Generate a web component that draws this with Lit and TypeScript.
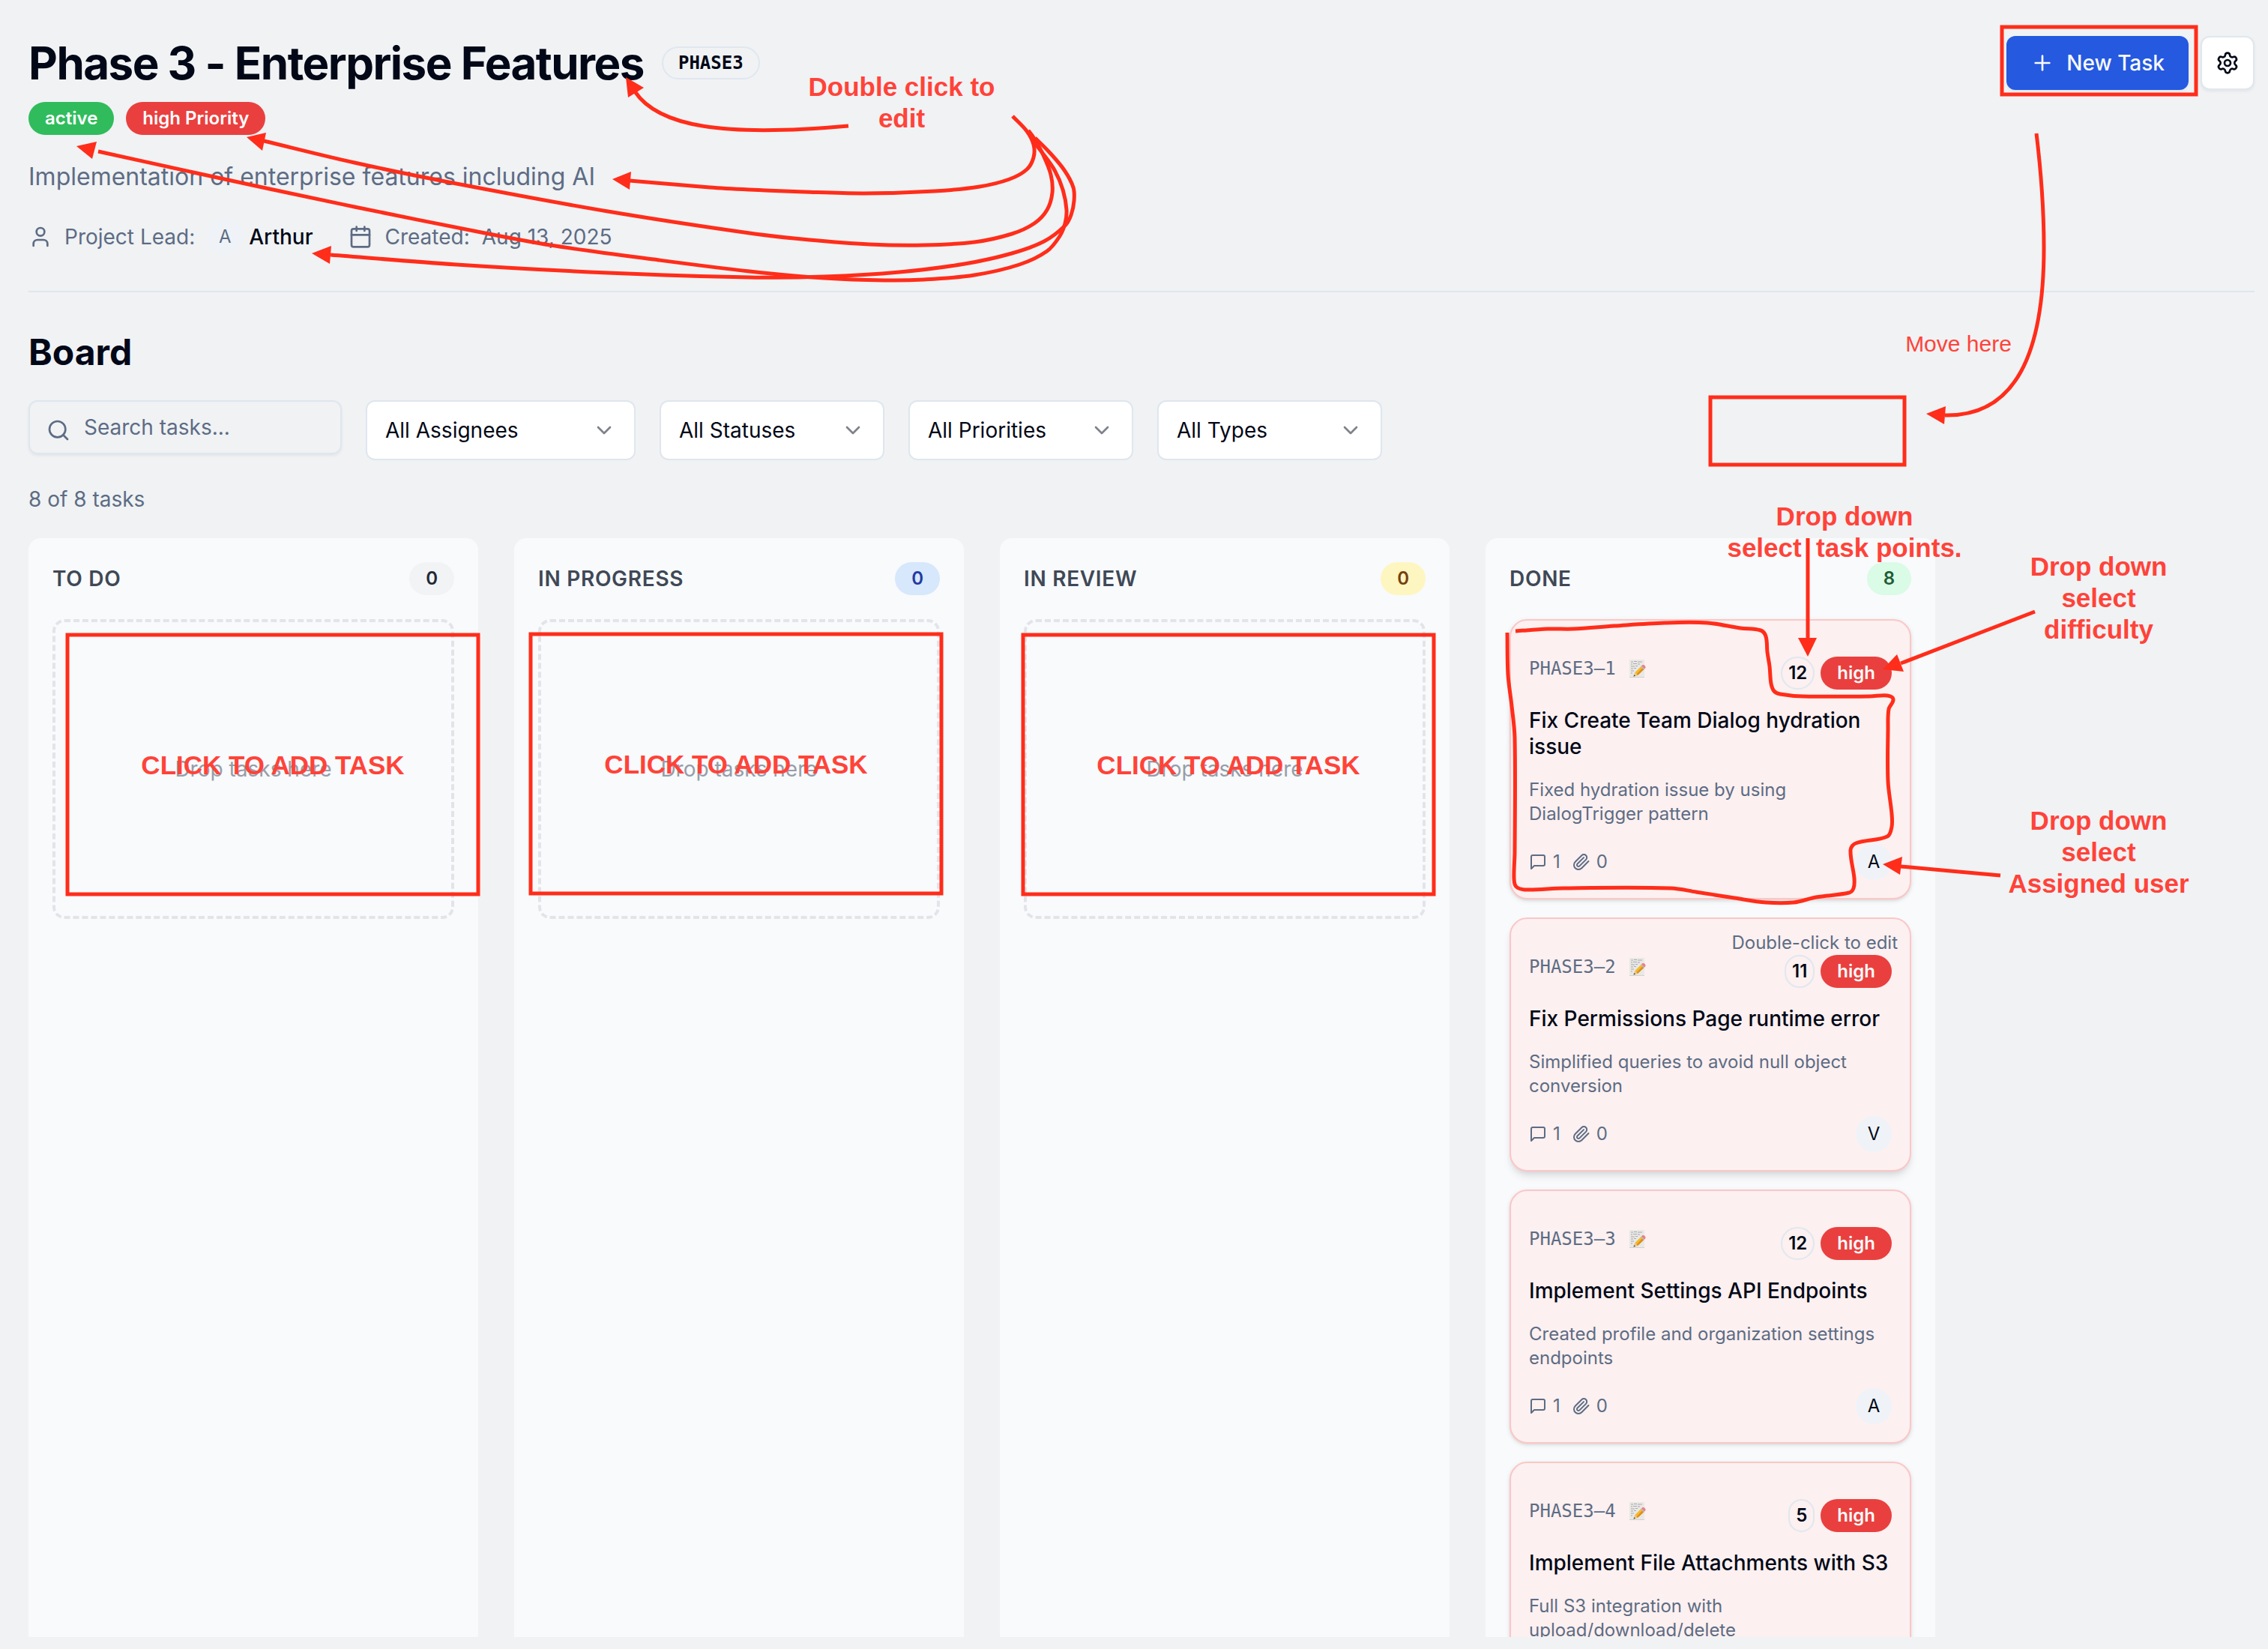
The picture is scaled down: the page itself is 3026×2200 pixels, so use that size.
import { LitElement, html, css, svg, nothing } from "lit";
import { customElement, property } from "lit/decorators.js";

type Point = [number, number];

interface Task {
  key: string;
  points: number;
  priority: string;
  title: string;
  text: string;
  comments: number;
  files: number;
  assignee: string;
  hovered?: boolean;
}

interface Column {
  name: string;
  tone: string;
  count: number;
  tasks: Task[];
}

interface Arrow {
  line: Point[] | string;
  head: Point[];
}

interface Note {
  x: number;
  y: number;
  lines: string[];
  light?: boolean;
}

const icon = (body: unknown) => html`<svg
  class="icon"
  viewBox="0 0 24 24"
  fill="none"
  stroke="currentColor"
  stroke-width="2"
  stroke-linecap="round"
  stroke-linejoin="round"
  aria-hidden="true"
>${body}</svg>`;

const glyph = {
  user: svg`<path d="M19 21v-2a4 4 0 0 0-4-4H9a4 4 0 0 0-4 4v2"/><circle cx="12" cy="7" r="4"/>`,
  calendar: svg`<path d="M8 2v4"/><path d="M16 2v4"/><rect width="18" height="18" x="3" y="4" rx="2"/><path d="M3 10h18"/>`,
  plus: svg`<path d="M5 12h14"/><path d="M12 5v14"/>`,
  settings: svg`<path d="M9.671 4.136a2.34 2.34 0 0 1 4.659 0 2.34 2.34 0 0 0 3.319 1.915 2.34 2.34 0 0 1 2.33 4.033 2.34 2.34 0 0 0 0 3.831 2.34 2.34 0 0 1-2.33 4.033 2.34 2.34 0 0 0-3.319 1.915 2.34 2.34 0 0 1-4.659 0 2.34 2.34 0 0 0-3.32-1.915 2.34 2.34 0 0 1-2.33-4.033 2.34 2.34 0 0 0 0-3.831A2.34 2.34 0 0 1 6.35 6.051a2.34 2.34 0 0 0 3.319-1.915"/><circle cx="12" cy="12" r="3"/>`,
  search: svg`<circle cx="11" cy="11" r="8"/><path d="m21 21-4.3-4.3"/>`,
  chevron: svg`<path d="m6 9 6 6 6-6"/>`,
  message: svg`<path d="M21 15a2 2 0 0 1-2 2H7l-4 4V5a2 2 0 0 1 2-2h14a2 2 0 0 1 2 2z"/>`,
  clip: svg`<path d="m21.44 11.05-9.19 9.19a6 6 0 0 1-8.49-8.49l8.57-8.57A4 4 0 1 1 18 8.84l-8.59 8.57a2 2 0 0 1-2.83-2.83l8.49-8.48"/>`,
};

const memo = html`<svg class="memo" viewBox="0 0 24 24" aria-hidden="true">
  <rect x="2" y="0" width="20" height="24" fill="#e9e8e7"/>
  <path d="M2 23.500H22" stroke="#d2d1d0" stroke-width="1"/>
  <path d="M4 3h3M8 2.500h4M13 3h6M4 6h2M7 5.500h5M13 6h3M4 9h5M10 8.500h3M4 12h3M8 11.500h3M4 15h4M4 18h2" stroke="#a9a9a9" stroke-width="1"/>
  <path d="M7.500 22.500 9.500 17 18 8.500 22 12.500 13 21Z" fill="#f5b92f"/>
  <path d="M11.500 19.500 20 10.500 22 12.500 13 21Z" fill="#da8f1f"/>
  <path d="M18 8.500 19.500 7Q21.500 6.500 22.700 8.200T23.500 11L22 12.500Z" fill="#ea7f86"/>
  <path d="M17 9.500 18 8.500 22 12.500 21 13.500Z" fill="#b9bcc2"/>
  <path d="M7.500 22.500 9.500 17 13 21Z" fill="#e9c692"/>
  <path d="M7.500 22.500 8.300 20.200 10 21.800Z" fill="#3c3c3c"/>
</svg>`;

const columns: Column[] = [
  { name: "TO DO", tone: "gray", count: 0, tasks: [] },
  { name: "IN PROGRESS", tone: "blue", count: 0, tasks: [] },
  { name: "IN REVIEW", tone: "yellow", count: 0, tasks: [] },
  {
    name: "DONE",
    tone: "green",
    count: 8,
    tasks: [
      { key: "PHASE3–1", points: 12, priority: "high", title: "Fix Create Team Dialog hydration issue", text: "Fixed hydration issue by using DialogTrigger pattern", comments: 1, files: 0, assignee: "A" },
      { key: "PHASE3–2", points: 11, priority: "high", title: "Fix Permissions Page runtime error", text: "Simplified queries to avoid null object conversion", comments: 1, files: 0, assignee: "V", hovered: true },
      { key: "PHASE3–3", points: 12, priority: "high", title: "Implement Settings API Endpoints", text: "Created profile and organization settings endpoints", comments: 1, files: 0, assignee: "A" },
      { key: "PHASE3–4", points: 5, priority: "high", title: "Implement File Attachments with S3", text: "Full S3 integration with upload/download/delete", comments: 1, files: 0, assignee: "A" },
    ],
  },
];

const filters = [
  { label: "Assignee", value: "All Assignees", wide: true },
  { label: "Status", value: "All Statuses" },
  { label: "Priority", value: "All Priorities" },
  { label: "Type", value: "All Types" },
];

/* Review markup drawn over the page */
const frames = [
  { x: 2671, y: 36, w: 259, h: 90 },
  { x: 2282, y: 530, w: 259, h: 90 },
  { x: 90, y: 847, w: 548, h: 346 },
  { x: 708, y: 846, w: 548, h: 346 },
  { x: 1365, y: 847, w: 548, h: 346 },
];

const arrows: Arrow[] = [
  {
    line: "M1132 168C965 183 878 169 847 122",
    head: [[835, 103], [859, 117], [838, 130]],
  },
  {
    line: [[1351, 155], [1370, 175], [1379, 193], [1379, 210], [1370, 226], [1347, 239], [1307, 249], [1247, 255], [1153, 258], [1073, 256], [1000, 253], [947, 250], [840, 241]],
    head: [[817, 239], [842, 229], [840, 253]],
  },
  {
    line: [[1372, 174], [1380, 185], [1392, 207], [1402, 233], [1404, 257], [1397, 280], [1380, 298], [1350, 312], [1300, 323], [1233, 327], [1160, 326], [1080, 320], [1000, 311], [811, 282], [609, 245], [473, 217], [352, 188]],
    head: [[329, 183], [355, 177], [350, 201]],
  },
  {
    line: [[1378, 188], [1390, 203], [1407, 227], [1418, 253], [1423, 280], [1421, 298], [1414, 315], [1397, 335], [1360, 353], [1300, 367], [1233, 373], [1180, 374], [1100, 371], [1000, 362], [879, 347], [734, 327], [642, 310], [473, 276], [304, 240], [131, 202]],
    head: [[102, 195], [129, 189], [123, 212]],
  },
  {
    line: [[1381, 184], [1400, 203], [1420, 227], [1432, 250], [1433, 268], [1429, 287], [1421, 301], [1393, 322], [1350, 338], [1287, 352], [1200, 363], [1100, 369], [1000, 370], [811, 364], [609, 353], [441, 340]],
    head: [[416, 338], [442, 328], [440, 352]],
  },
  {
    line: "M2717 178C2724 236 2727 280 2727 330C2727 470 2690 556 2595 554",
    head: [[2570, 552], [2596, 542], [2594, 566]],
  },
  { line: [[2412, 718], [2412, 852]], head: [[2399, 851], [2424, 851], [2412, 876]] },
  { line: [[2715, 816], [2536, 885]], head: [[2512, 893], [2531, 873], [2540, 896]] },
  { line: [[2669, 1168], [2536, 1156]], head: [[2512, 1153], [2538, 1143], [2535, 1167]] },
];

const outline: Point[] = [
  [2022, 842], [2065, 839], [2099, 839], [2154, 835], [2221, 831], [2278, 831], [2322, 838], [2349, 841],
  [2356, 849], [2358, 870], [2361, 889], [2363, 912], [2367, 922], [2375, 926], [2406, 929], [2495, 929],
  [2518, 928], [2526, 933], [2520, 946], [2519, 973], [2519, 1042], [2524, 1086], [2524, 1103], [2518, 1116],
  [2476, 1125], [2469, 1134], [2474, 1172], [2473, 1185], [2467, 1191], [2423, 1197], [2393, 1204], [2356, 1204],
  [2314, 1198], [2263, 1190], [2229, 1185], [2086, 1185], [2036, 1187], [2023, 1183], [2020, 1172], [2021, 1137],
  [2021, 984], [2017, 942], [2012, 900], [2011, 844],
];

const notes: Note[] = [
  { x: 1203, y: 95, lines: ["Double click to", "edit"] },
  { x: 2613, y: 438, lines: ["Move here"], light: true },
  { x: 2461, y: 668, lines: ["Drop down", "select  task points."] },
  { x: 2800, y: 735, lines: ["Drop down", "select", "difficulty"] },
  { x: 2800, y: 1074, lines: ["Drop down", "select", "Assigned user"] },
  { x: 364, y: 1000, lines: ["CLICK TO ADD TASK"] },
  { x: 982, y: 999, lines: ["CLICK TO ADD TASK"] },
  { x: 1639, y: 1000, lines: ["CLICK TO ADD TASK"] },
];

/* Catmull-Rom spline through the points, written as cubic segments */
function smooth(pts: Point[] | string): string {
  if (typeof pts === "string") return pts;
  let d = `M${pts[0][0]} ${pts[0][1]}`;
  for (let i = 0; i < pts.length - 1; i++) {
    const a = pts[Math.max(i - 1, 0)];
    const b = pts[i];
    const c = pts[i + 1];
    const e = pts[Math.min(i + 2, pts.length - 1)];
    const len = Math.hypot(c[0] - b[0], c[1] - b[1]);
    const k1 = len / (Math.hypot(c[0] - a[0], c[1] - a[1]) || 1) / 3;
    const k2 = len / (Math.hypot(e[0] - b[0], e[1] - b[1]) || 1) / 3;
    d += `C${b[0] + (c[0] - a[0]) * k1} ${b[1] + (c[1] - a[1]) * k1} ${c[0] - (e[0] - b[0]) * k2} ${c[1] - (e[1] - b[1]) * k2} ${c[0]} ${c[1]}`;
  }
  return d;
}

@customElement("review-markup")
export class ReviewMarkup extends LitElement {
  static styles = css`
    :host {
      position: absolute;
      inset: 0;
      overflow: hidden;
      pointer-events: none;
    }
    .lines {
      position: absolute;
      top: 0;
      left: 0;
      overflow: visible;
    }
    .stroke {
      fill: none;
      stroke: #ff2d1a;
      stroke-width: 5;
    }
    .head {
      fill: #ff2d1a;
    }
    .note {
      position: absolute;
      margin: 0;
      transform: translateX(-50%);
      font: 700 35px/42px "Liberation Sans", Arial, sans-serif;
      color: #ff4339;
      text-align: center;
      white-space: pre;
    }
    .note.light {
      font-weight: 400;
      font-size: 30px;
    }
  `;

  render() {
    return html`
      <svg class="lines" width="1" height="1" aria-hidden="true">
        ${frames.map((f) => svg`<rect class="stroke" x=${f.x} y=${f.y} width=${f.w} height=${f.h}/>`)}
        ${arrows.map(
          (a) => svg`<path class="stroke" d=${smooth(a.line)}/><polygon class="head" points=${a.head.join(" ")}/>`,
        )}
        <path class="stroke" d=${smooth(outline)} />
      </svg>
      ${notes.map(
        (n) =>
          html`<p class="note ${n.light ? "light" : ""}" style="left:${n.x}px;top:${n.y}px">${n.lines.join("\n")}</p>`,
      )}
    `;
  }
}

@customElement("task-card")
export class TaskCard extends LitElement {
  @property({ attribute: false }) task!: Task;

  static styles = css`
    :host {
      display: block;
    }
    .card {
      position: relative;
      display: flex;
      flex-direction: column;
      gap: 24px;
      padding: 48px 24px 24px;
      border: 2px solid #fcc6c6;
      border-radius: 24px;
      background: #fcf0f0;
      box-shadow: 0 2px 6px rgb(0 0 0 / 0.1), 0 2px 4px -2px rgb(0 0 0 / 0.1);
      font-size: 24px;
      line-height: 32px;
      color: #5d6c84;
    }
    .card.hovered {
      box-shadow: 0 8px 12px -2px rgb(0 0 0 / 0.1), 0 4px 8px -4px rgb(0 0 0 / 0.1);
    }
    .hint {
      position: absolute;
      top: 16px;
      right: 16px;
    }
    .top,
    .bottom {
      display: flex;
      justify-content: space-between;
      align-items: flex-start;
    }
    .bottom {
      align-items: center;
    }
    .id {
      display: flex;
      align-items: center;
      gap: 16px;
      font-family: "DejaVu Sans Mono", monospace;
    }
    .memo {
      width: 24px;
      height: 24px;
    }
    .badges {
      display: flex;
      gap: 8px;
    }
    .badge {
      box-sizing: border-box;
      height: 44px;
      border: 2px solid transparent;
      border-radius: 22px;
      font: 600 24px/40px Inter, sans-serif;
    }
    .points {
      padding: 0 8px;
      border-color: #e0e7ef;
      background: none;
      color: #020817;
    }
    .priority {
      padding: 0 20px;
      background: #e9403f;
      color: #fafafa;
    }
    .title {
      margin: 0;
      font-size: 28px;
      font-weight: 500;
      line-height: 35px;
      color: #020817;
    }
    .text {
      margin: 0;
    }
    .stats,
    .stat {
      display: flex;
      align-items: center;
      gap: 16px;
    }
    .stat {
      gap: 8px;
    }
    .icon {
      width: 24px;
      height: 24px;
    }
    .avatar {
      width: 48px;
      height: 48px;
      padding: 0;
      border: 0;
      border-radius: 50%;
      background: #eff3f8;
      font: 400 24px/48px Inter, sans-serif;
      color: #020817;
    }
  `;

  render() {
    const t = this.task;
    return html`<article class="card ${t.hovered ? "hovered" : ""}">
      ${t.hovered ? html`<span class="hint">Double-click to edit</span>` : nothing}
      <div class="top">
        <span class="id">${t.key}${memo}</span>
        <div class="badges">
          <button class="badge points">${t.points}</button>
          <button class="badge priority">${t.priority}</button>
        </div>
      </div>
      <h4 class="title">${t.title}</h4>
      <p class="text">${t.text}</p>
      <div class="bottom">
        <div class="stats">
          <span class="stat">${icon(glyph.message)}${t.comments}</span>
          <span class="stat">${icon(glyph.clip)}${t.files}</span>
        </div>
        <button class="avatar">${t.assignee}</button>
      </div>
    </article>`;
  }
}

@customElement("app-root")
export class AppRoot extends LitElement {
  static styles = css`
    :host {
      position: relative;
      display: flex;
      flex-direction: column;
      gap: 48px;
      box-sizing: border-box;
      height: 100vh;
      padding: 48px 18px 16px 38px;
      overflow: hidden;
      background: #f0f2f4;
      font: 400 28px/40px Inter, sans-serif;
      color: #020817;
    }
    h1,
    h2,
    h3,
    p {
      margin: 0;
    }
    .icon {
      flex: none;
      width: 32px;
      height: 32px;
    }
    .header {
      display: flex;
      justify-content: space-between;
      align-items: flex-start;
      padding-bottom: 48px;
      border-bottom: 2px solid #dfe6ee;
    }
    .project {
      display: flex;
      flex-direction: column;
      gap: 32px;
    }
    .heading {
      display: flex;
      flex-direction: column;
      gap: 16px;
    }
    .name,
    .tags,
    .meta,
    .fact,
    .actions,
    .person {
      display: flex;
      align-items: center;
    }
    .name {
      gap: 24px;
    }
    .tags,
    .fact,
    .actions {
      gap: 16px;
    }
    .person {
      gap: 8px;
      color: #020817;
      font-weight: 500;
    }
    .title {
      font-size: 60px;
      font-weight: 700;
      line-height: 72px;
      letter-spacing: -0.025em;
    }
    .pill {
      padding: 0 20px;
      border: 2px solid transparent;
      border-radius: 22px;
      font-size: 24px;
      font-weight: 600;
      line-height: 40px;
    }
    .pill.code {
      border-color: #e0e7ef;
      font-family: "DejaVu Sans Mono", monospace;
    }
    .pill.active {
      background: #30bc5c;
      color: #fff;
    }
    .pill.high {
      background: #e9403f;
      color: #fff;
    }
    .summary {
      font-size: 32px;
      line-height: 48px;
      color: #5d6c84;
    }
    .meta {
      gap: 48px;
      height: 48px;
      color: #5d6c84;
    }
    .face {
      width: 48px;
      border-radius: 50%;
      background: #eff3f8;
      font-size: 24px;
      font-weight: 400;
      line-height: 48px;
      text-align: center;
      color: #5d6c84;
    }
    .new,
    .gear {
      display: flex;
      align-items: center;
      justify-content: center;
      gap: 16px;
      box-sizing: border-box;
      height: 72px;
      padding: 0 32px;
      border: 0;
      border-radius: 12px;
      background: #2459e0;
      font: 500 28px/40px Inter, sans-serif;
      color: #f8fafc;
      box-shadow: 0 2px 4px rgb(0 0 0 / 0.06);
    }
    .gear {
      width: 72px;
      padding: 0;
      border: 2px solid #e0e7ef;
      background: #fff;
      color: #020817;
    }
    .board {
      display: flex;
      flex: 1;
      flex-direction: column;
      gap: 32px;
      min-height: 0;
    }
    .board-title {
      font-size: 48px;
      font-weight: 700;
      line-height: 64px;
    }
    .filters {
      display: flex;
      gap: 32px;
      height: 80px;
    }
    .search {
      position: relative;
      flex: 0 1 418px;
    }
    .search .icon {
      position: absolute;
      top: 24px;
      left: 24px;
      color: #5d6c84;
    }
    .search-box {
      box-sizing: border-box;
      width: 100%;
      height: 72px;
      padding: 0 24px 0 72px;
      border: 2px solid #dfe6ee;
      border-radius: 12px;
      background: transparent;
      box-shadow: 0 2px 4px rgb(0 0 0 / 0.06);
      font: inherit;
    }
    .search-box::placeholder {
      color: #5d6c84;
      opacity: 1;
    }
    .filter {
      position: relative;
      flex: 0 1 300px;
    }
    .filter.wide {
      flex-basis: 360px;
    }
    .filter .icon {
      position: absolute;
      top: 24px;
      right: 26px;
      opacity: 0.5;
      pointer-events: none;
    }
    .picker {
      width: 100%;
      height: 80px;
      padding: 0 24px;
      border: 2px solid #dfe6ee;
      border-radius: 12px;
      appearance: none;
      background: #fff;
      font: inherit;
      color: inherit;
    }
    .count {
      color: #5d6c84;
    }
    .columns {
      display: flex;
      flex: 1;
      gap: 48px;
      min-height: 0;
      overflow: hidden;
    }
    .column {
      display: flex;
      flex: 0 0 600px;
      flex-direction: column;
      gap: 32px;
      box-sizing: border-box;
      padding: 32px 32px 0;
      border-radius: 16px 16px 0 0;
      background: #f8fafc;
    }
    .column-head {
      display: flex;
      align-items: center;
      justify-content: space-between;
    }
    .column-name {
      font-size: 28px;
      font-weight: 600;
      letter-spacing: 0.025em;
      color: #3f4856;
    }
    .gray {
      background: #f2f3f5;
      color: #1f2937;
    }
    .blue {
      background: #d7e7fc;
      color: #233aa3;
    }
    .yellow {
      background: #fef6c0;
      color: #75410f;
    }
    .green {
      background: #dafbe6;
      color: #1f5c36;
    }
    .drop {
      display: grid;
      place-items: center;
      box-sizing: border-box;
      height: 400px;
      border: 4px dashed #e2e4e9;
      border-radius: 16px;
      color: #979da9;
    }
    .cards {
      display: flex;
      flex-direction: column;
      gap: 24px;
    }
  `;

  private column(c: Column) {
    return html`<section class="column">
      <div class="column-head">
        <h3 class="column-name">${c.name}</h3>
        <span class="pill ${c.tone}">${c.count}</span>
      </div>
      ${c.tasks.length
        ? html`<div class="cards">${c.tasks.map((t) => html`<task-card .task=${t}></task-card>`)}</div>`
        : html`<div class="drop">Drop tasks here</div>`}
    </section>`;
  }

  render() {
    return html`
      <header class="header">
        <div class="project">
          <div class="heading">
            <div class="name">
              <h1 class="title">Phase 3 - Enterprise Features</h1>
              <span class="pill code">PHASE3</span>
            </div>
            <div class="tags">
              <span class="pill active">active</span>
              <span class="pill high">high Priority</span>
            </div>
          </div>
          <p class="summary">Implementation of enterprise features including AI</p>
          <div class="meta">
            <div class="fact">
              ${icon(glyph.user)}<span>Project Lead:</span>
              <span class="person"><span class="face">A</span>Arthur</span>
            </div>
            <div class="fact">${icon(glyph.calendar)}<span>Created:</span><span>Aug 13, 2025</span></div>
          </div>
        </div>
        <div class="actions">
          <button class="new">${icon(glyph.plus)}New Task</button>
          <button class="gear" aria-label="Project settings">${icon(glyph.settings)}</button>
        </div>
      </header>
      <main class="board">
        <h2 class="board-title">Board</h2>
        <div class="filters">
          <div class="search">
            <input class="search-box" type="search" placeholder="Search tasks..." aria-label="Search tasks" />
            ${icon(glyph.search)}
          </div>
          ${filters.map(
            (f) => html`<div class="filter ${f.wide ? "wide" : ""}">
              <select class="picker" aria-label=${f.label}><option>${f.value}</option></select>
              ${icon(glyph.chevron)}
            </div>`,
          )}
        </div>
        <p class="count">8 of 8 tasks</p>
        <div class="columns">${columns.map((c) => this.column(c))}</div>
      </main>
      <review-markup></review-markup>
    `;
  }
}
